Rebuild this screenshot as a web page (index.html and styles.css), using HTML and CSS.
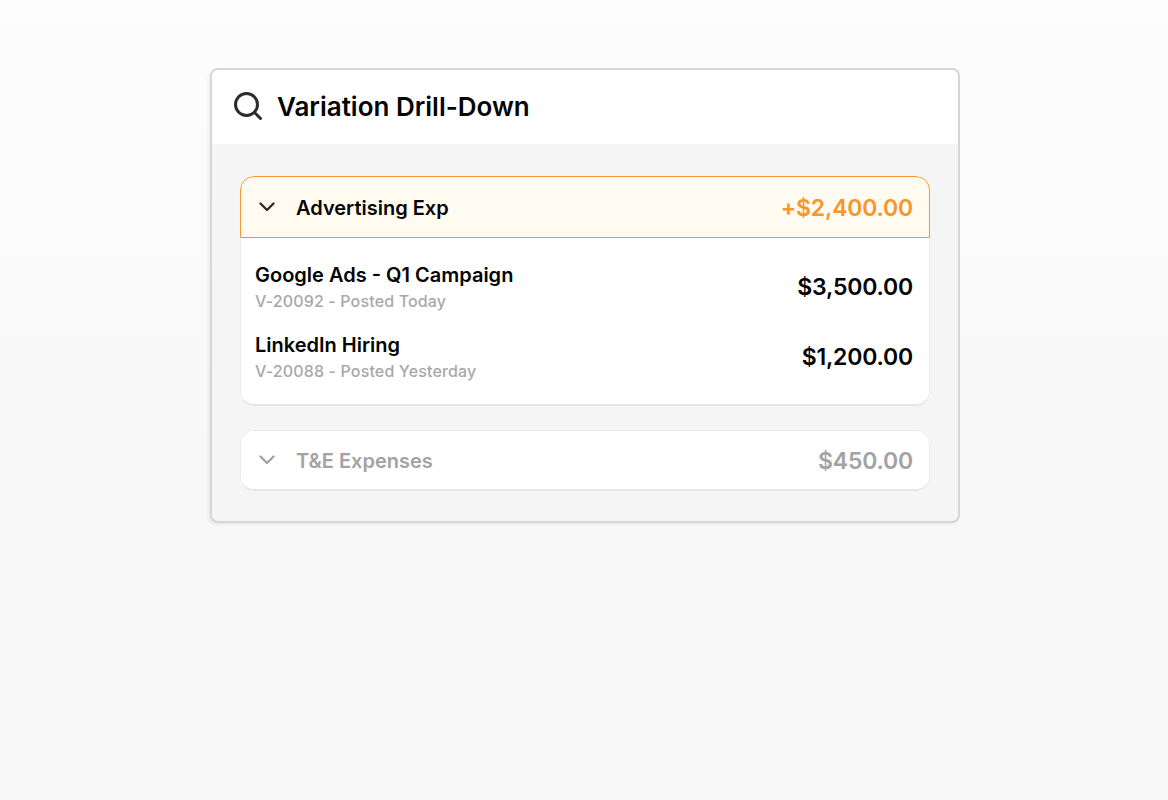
FILE: index.html
```html
<!DOCTYPE html>
<html lang="en">
<head>
<meta charset="utf-8">
<title>Variation Drill-Down</title>
<link rel="stylesheet" href="styles.css">
</head>
<body>
<main class="panel">
  <header class="panel-head">
    <svg class="search-icon" viewBox="0 0 28 28" aria-hidden="true"><circle cx="12.5" cy="12.5" r="11"/><path d="M21 21l5.5 5.5"/></svg>
    <h1 class="panel-title">Variation Drill-Down</h1>
  </header>
  <div class="panel-body">
    <section class="group">
      <div class="group-head group-head-active">
        <svg class="chevron chevron-dark" viewBox="0 0 16 10" aria-hidden="true"><path d="M1.5 1.5L8 8l6.5-6.5"/></svg>
        <span class="group-name">Advertising Exp</span>
        <span class="group-amount amount-orange">+$2,400.00</span>
      </div>
      <div class="rows">
        <div class="row">
          <div class="row-text">
            <div class="row-title">Google Ads - Q1 Campaign</div>
            <div class="row-sub">V-20092 - Posted Today</div>
          </div>
          <div class="row-amount">$3,500.00</div>
        </div>
        <div class="row">
          <div class="row-text">
            <div class="row-title">LinkedIn Hiring</div>
            <div class="row-sub">V-20088 - Posted Yesterday</div>
          </div>
          <div class="row-amount">$1,200.00</div>
        </div>
      </div>
    </section>
    <section class="group">
      <div class="group-head group-head-muted">
        <svg class="chevron chevron-grey" viewBox="0 0 16 10" aria-hidden="true"><path d="M1.5 1.5L8 8l6.5-6.5"/></svg>
        <span class="group-name">T&amp;E Expenses</span>
        <span class="group-amount">$450.00</span>
      </div>
    </section>
  </div>
</main>
</body>
</html>
```
FILE: styles.css
```css
* { box-sizing: border-box; }
html, body { height: 100%; }
body {
  margin: 0;
  padding: 68px 0 0 210px;
  background: linear-gradient(180deg, #fdfdfd 0%, #f8f8f8 55%, #f8f8f8 100%);
  font-family: Inter, "Liberation Sans", sans-serif;
  color: #030303;
}
.panel {
  width: 750px;
  height: 455px;
  border: 2px solid #d6d6d6;
  border-radius: 8px;
  background: #f5f5f5;
  overflow: hidden;
  box-shadow: -2px 2px 3px rgba(0,0,0,.05);
}
.panel-head {
  height: 74px;
  background: #fff;
  display: flex;
  align-items: center;
  padding: 0 0 0 22px;
  gap: 15px;
}
.search-icon { width: 28px; height: 28px; flex: none; margin-top: -2px; fill: none; stroke: #2b2b2b; stroke-width: 3; stroke-linecap: round; }
.panel-title { margin: 0; font-size: 26px; font-weight: 600; line-height: 30px; }
.panel-body { padding: 32px 28px 0 28px; display: flex; flex-direction: column; gap: 24px; }
.group {
  background: #fff;
  border-radius: 14px;
  overflow: hidden;
}
.group-head { height: 61px; display: flex; align-items: center; padding: 0 16px 0 18px; }
.group-head-active { height: 62px; background: #fffbf0; border: 1px solid #f5962f; border-radius: 14px 14px 0 0; }
.group-head-muted { color: #a3a3a3; border: 1px solid #ebebeb; border-bottom: 2px solid #e6e6e2; border-radius: 14px; }
.chevron { width: 16px; height: 10px; flex: none; fill: none; stroke-width: 2.4; stroke-linecap: round; stroke-linejoin: round; }
.chevron-dark { stroke: #2b2b2b; }
.chevron-grey { stroke: #a3a3a3; }
.group-name { margin-left: 21px; padding-top: 2px; font-size: 20px; font-weight: 600; flex: 1; }
.group-amount { padding-top: 1px; font-size: 23px; font-weight: 600; letter-spacing: -.2px; }
.amount-orange { color: #f5962f; }
.rows {
  height: 168px;
  padding: 20px 16px 0 14px;
  display: flex;
  flex-direction: column;
  gap: 14px;
  border: 1px solid #ebebeb;
  border-top: 0;
  border-bottom: 2px solid #e6e6e2;
  border-radius: 0 0 14px 14px;
}
.row { display: flex; align-items: center; justify-content: space-between; height: 56px; }
.row-title { font-size: 20px; font-weight: 600; line-height: 30px; }
.row-sub { font-size: 16px; font-weight: 500; line-height: 22px; letter-spacing: .15px; color: #a8a8a8; }
.row-amount { padding-top: 2px; font-size: 23px; font-weight: 600; letter-spacing: -.2px; }
```
